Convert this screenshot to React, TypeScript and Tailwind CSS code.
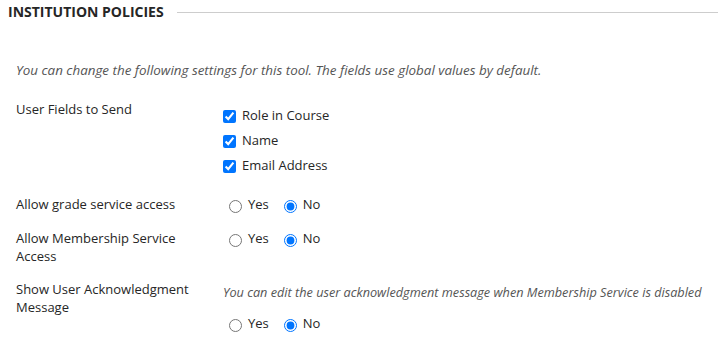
import React from 'react';

const font = { fontFamily: '"Open Sans", "Liberation Sans", sans-serif' };

function Radio({ name }: { name: string }) {
  return (
    <div className="flex h-[18px] items-center text-[13px] text-[#262626]">
      <label className="flex items-center">
        <input type="radio" name={name} className="m-0 ml-[6px] mt-[5px] h-[13px] w-[13px]" />
        <span className="ml-[6px]">Yes</span>
      </label>
      <label className="ml-[15px] flex items-center">
        <input type="radio" name={name} defaultChecked className="m-0 mt-[5px] h-[13px] w-[13px]" />
        <span className="ml-[6px]">No</span>
      </label>
    </div>
  );
}

function Check({ label }: { label: string }) {
  return (
    <label className="flex h-[25px] items-center text-[13px] text-[#262626]">
      <input type="checkbox" defaultChecked className="m-0 mt-[3px] h-[13px] w-[13px]" />
      <span className="ml-[6px]">{label}</span>
    </label>
  );
}

export default function App() {
  return (
    <div className="h-[356px] w-[718px] overflow-hidden bg-white leading-[18px]" style={font}>
      {/* Section header */}
      <div className="flex h-6 items-center pl-2">
        <h2 className="text-[14px] font-bold uppercase text-[#262626]">Institution Policies</h2>
        <div className="ml-[13px] h-px flex-1 bg-[#cdcdcd]" />
      </div>

      <div className="px-4">
        <p className="mt-[37px] text-[13.4px] italic text-[#555]">
          You can change the following settings for this tool. The fields use global values by default.
        </p>

        <div className="mt-[21px] flex items-start">
          <div className="w-[207px] text-[13px] text-[#262626]">User Fields to Send</div>
          <div className="pt-[2px]">
            <Check label="Role in Course" />
            <Check label="Name" />
            <Check label="Email Address" />
          </div>
        </div>

        <div className="mt-[18px] flex items-start">
          <div className="w-[207px] text-[13px] text-[#262626]">Allow grade service access</div>
          <Radio name="grade" />
        </div>

        <div className="mt-[16px] flex items-start">
          <div className="w-[207px] pr-8 text-[13px] text-[#262626]">Allow Membership Service Access</div>
          <Radio name="membership" />
        </div>

        <div className="mt-[15px] flex items-start">
          <div className="w-[207px] pr-8 text-[13px] text-[#262626]">Show User Acknowledgment Message</div>
          <div>
            <p className="mt-[3px] text-[12.7px] italic text-[#555]">
              You can edit the user acknowledgment message when Membership Service is disabled
            </p>
            <div className="mt-[13px]">
              <Radio name="ack" />
            </div>
          </div>
        </div>
      </div>
    </div>
  );
}
